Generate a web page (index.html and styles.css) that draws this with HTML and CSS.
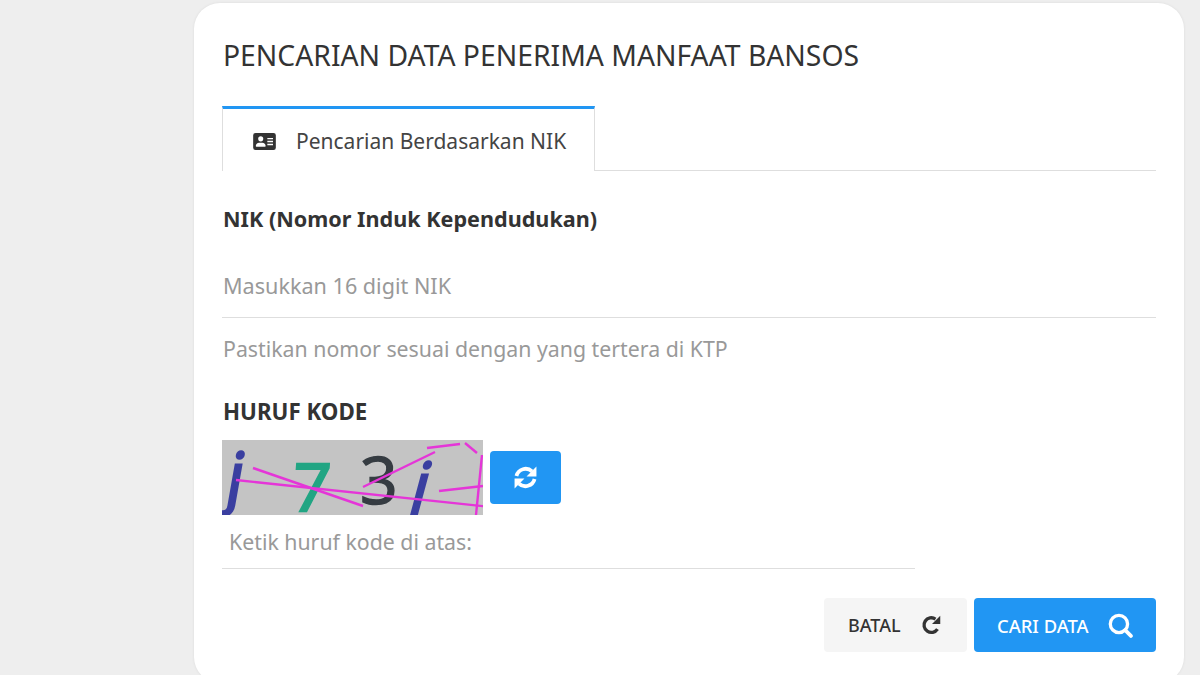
FILE: index.html
```html
<!DOCTYPE html>
<html lang="id">
<head>
<meta charset="utf-8">
<title>Pencarian Data Penerima Manfaat Bansos</title>
<link rel="stylesheet" href="styles.css">
</head>
<body>
<main class="card">
  <h1 class="title">PENCARIAN DATA PENERIMA MANFAAT BANSOS</h1>
  <div class="tabs">
    <div class="tab">
      <svg class="tab-icon" viewBox="0 0 24 18" aria-hidden="true">
        <path fill-rule="evenodd" fill="#333" d="M2.500 0h19A2.500 2.500 0 0 1 24 2.500v13a2.500 2.500 0 0 1-2.500 2.500h-19A2.500 2.500 0 0 1 0 15.500v-13A2.500 2.500 0 0 1 2.500 0zM8 3.500a2.700 2.700 0 1 0 0 5.400 2.700 2.700 0 0 0 0-5.400zM3.400 14.500h9.200c.4 0 .6-.3.6-.7 0-2-1.500-3.500-3.500-3.500H6.300c-2 0-3.500 1.500-3.500 3.500 0 .4.200.7.600.7zM15 5.200v1.500h6V5.200zM15 8.300v1.500h6V8.300zM15 11.400v1.500h6v-1.500z"/>
      </svg>
      <span>Pencarian Berdasarkan NIK</span>
    </div>
  </div>
  <label class="label label-nik" for="nik">NIK (Nomor Induk Kependudukan)</label>
  <input class="field field-nik" id="nik" type="text" placeholder="Masukkan 16 digit NIK">
  <p class="hint">Pastikan nomor sesuai dengan yang tertera di KTP</p>
  <label class="label label-code" for="kode">HURUF KODE</label>
  <div class="captcha-row">
    <svg class="captcha" viewBox="0 0 261 75" role="img" aria-label="Kode captcha">
      <rect width="261" height="75" fill="#c4c4c4"/>
      <g class="glyphs">
        <text class="cg cg-blue" transform="translate(2 60) skewX(-10)">j</text>
        <text class="cg cg-green" transform="translate(69 71) skewX(-4)">7</text>
        <text class="cg cg-dark" transform="translate(138 64)">3</text>
        <text class="cg cg-blue" transform="translate(185 70) skewX(-15)">j</text>
      </g>
      <g class="noise">
        <path d="M14 40 L278 68"/>
        <path d="M31 28 L141 66"/>
        <path d="M141 47 L213 12"/>
        <path d="M205 8 L238 4"/>
        <path d="M243 3 L255 13"/>
        <path d="M217 51 L261 46"/>
        <path d="M260 15 L254 75"/>
      </g>
    </svg>
    <button class="btn-refresh" type="button" aria-label="Muat ulang kode">
      <svg viewBox="0 0 24 24" class="refresh-icon" aria-hidden="true">
        <path class="sync-arc" d="M3.300 10.500A9 9 0 0 1 18.300 6.200"/>
        <path class="sync-head" d="M22.500 1.500v9.500H13z"/>
        <path class="sync-arc" d="M20.700 13.500A9 9 0 0 1 5.700 17.800"/>
        <path class="sync-head" d="M1.500 22.500V13H11z"/>
      </svg>
    </button>
  </div>
  <input class="field field-code" id="kode" type="text" placeholder="Ketik huruf kode di atas:">
  <div class="actions">
    <button class="btn btn-cancel" type="button">
      <span>BATAL</span>
      <svg viewBox="0 0 24 24" class="btn-icon" aria-hidden="true">
        <path fill="none" stroke="#333" stroke-width="3.600" d="M18 16.500A8 8 0 1 1 15.800 5.500"/>
        <path fill="#333" d="M21 2v9h-9z"/>
      </svg>
    </button>
    <button class="btn btn-search" type="button">
      <span>CARI DATA</span>
      <svg viewBox="0 0 24 24" class="btn-icon" aria-hidden="true">
        <circle cx="10.500" cy="10.500" r="8.300" fill="none" stroke="#fff" stroke-width="3.200"/>
        <path d="M16.500 16.500L22 22" stroke="#fff" stroke-width="3.600" stroke-linecap="round"/>
      </svg>
    </button>
  </div>
</main>
</body>
</html>
```

FILE: styles.css
```css
* { box-sizing: border-box; }
html, body { margin: 0; height: 675px; overflow: hidden; }
body {
  background: #eeeeee;
  font-family: "Noto Sans", "Open Sans", sans-serif;
  color: #333;
  padding: 3px 16px 0 194px;
}
.card {
  background: #fff;
  border-radius: 26px;
  height: 680px;
  padding: 0 28px;
  display: flex;
  flex-direction: column;
  box-shadow: 0 0 3px rgba(0, 0, 0, 0.08);
}
.title {
  margin: 34px 0 0;
  padding-left: 1px;
  font-size: 28.300px;
  line-height: 37px;
  font-weight: 400;
  color: #333;
  white-space: nowrap;
}
.tabs {
  margin-top: 32px;
  border-bottom: 1px solid #dedede;
  height: 65px;
  display: flex;
}
.tab {
  width: 373px;
  height: 65px;
  border-top: 3px solid #2196f3;
  border-left: 1px solid #dedede;
  border-right: 1px solid #dedede;
  background: #fff;
  display: flex;
  align-items: center;
  padding: 2px 0 0 30px;
  gap: 20px;
  font-size: 21px;
  color: #444;
  white-space: nowrap;
}
.tab-icon { width: 23px; height: 17px; flex: none; }
.label { display: block; padding-left: 1px; font-weight: 700; color: #333; font-size: 21.600px; line-height: 30px; }
.label-nik { margin-top: 33px; }
.field {
  display: block;
  width: 100%;
  border: 0;
  border-bottom: 1px solid #dedede;
  outline: 0;
  background: transparent;
  font-family: inherit;
  color: #333;
  font-size: 21.300px;
  padding: 0;
}
.field::placeholder { color: #999; opacity: 1; }
.field-nik { margin-top: 12px; height: 72px; padding: 8px 0 0 1px; font-size: 21.600px; }
.hint { margin: 16px 0 0; padding-left: 1px; font-size: 21.300px; line-height: 30px; color: #999; }
.label-code { margin-top: 33px; font-size: 22.300px; }
.captcha-row { display: flex; align-items: center; gap: 7px; margin-top: 13px; }
.captcha { display: block; width: 261px; height: 75px; flex: none; }
.glyphs { filter: blur(0.5px); }
.cg { font-family: "Open Sans", sans-serif; font-size: 66px; }
.cg-blue { fill: #3a3fa0; stroke: #3a3fa0; stroke-width: 2.500px; font-size: 66px; }
.cg-green { fill: #21a583; stroke: #21a583; stroke-width: 2.500px; font-size: 66px; }
.cg-dark { fill: #363c42; stroke: #363c42; stroke-width: 1.500px; }
.noise { filter: blur(0.4px); }
.noise path { fill: none; stroke: #e535d8; stroke-width: 2.400; }
.btn-refresh {
  width: 71px;
  height: 53px;
  border: 0;
  border-radius: 4px;
  background: #2196f3;
  display: flex;
  align-items: center;
  justify-content: center;
  padding: 0;
}
.refresh-icon { width: 25px; height: 25px; }
.sync-arc { fill: none; stroke: #fff; stroke-width: 3.600; }
.sync-head { fill: #fff; }
.field-code {
  width: 693px;
  height: 54px;
  padding: 0 0 0 7px;
}
.actions { display: flex; justify-content: flex-end; gap: 7px; margin-top: 29px; }
.btn {
  height: 54px;
  border: 0;
  border-radius: 4px;
  display: flex;
  align-items: center;
  font-family: inherit;
  font-size: 18px;
  font-weight: 500;
  padding: 0;
}
.btn-cancel { width: 143px; background: #f5f5f5; color: #333; padding-left: 24px; gap: 20px; }
.btn-search { width: 182px; background: #2196f3; color: #fff; padding-left: 23px; gap: 19px; font-size: 18.400px; }
.btn-icon { width: 22px; height: 22px; flex: none; }
.btn-search .btn-icon { width: 25px; height: 25px; }
```
